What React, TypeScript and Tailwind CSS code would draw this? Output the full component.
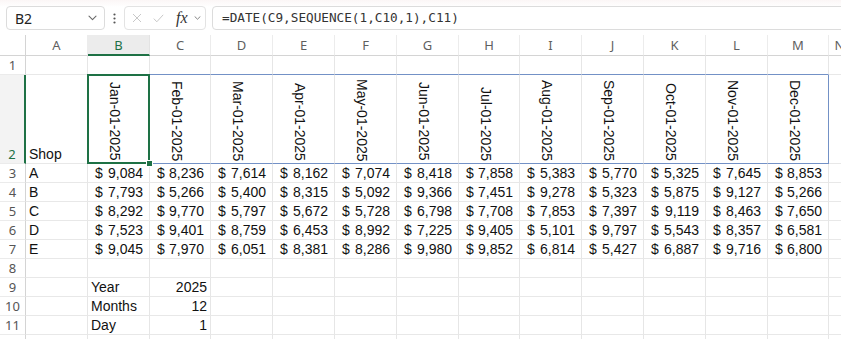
import React from "react";

const colLetters = ["A", "B", "C", "D", "E", "F", "G", "H", "I", "J", "K", "L", "M", "N"];
const months = ["Jan", "Feb", "Mar", "Apr", "May", "Jun", "Jul", "Aug", "Sep", "Oct", "Nov", "Dec"];
const shops = ["A", "B", "C", "D", "E"];
const data: string[][] = [
  ["9,084", "8,236", "7,614", "8,162", "7,074", "8,418", "7,858", "5,383", "5,770", "5,325", "7,645", "8,853"],
  ["7,793", "5,266", "5,400", "8,315", "5,092", "9,366", "7,451", "9,278", "5,323", "5,875", "9,127", "5,266"],
  ["8,292", "9,770", "5,797", "5,672", "5,728", "6,798", "7,708", "7,853", "7,397", "9,119", "8,463", "7,650"],
  ["7,523", "9,401", "8,759", "6,453", "8,992", "7,225", "9,405", "5,101", "9,797", "5,543", "8,357", "6,581"],
  ["9,045", "7,970", "6,051", "8,381", "8,286", "9,980", "9,852", "6,814", "5,427", "6,887", "9,716", "6,800"],
];

const uiFont = "font-['Noto_Sans','Open_Sans',sans-serif]";
const cellFont = "font-['Liberation_Sans',Arial,sans-serif]";

const grid = "border-r border-b border-r-[#e6e6e6] border-b-[#e8e8e8]";
const blueB = "border-r border-b border-r-[#e6e6e6] border-b-[#7391c6]";

function RowHead({ n, selected }: { n?: number; selected?: boolean }) {
  return (
    <div
      className={`${uiFont} text-[13px] leading-[16px] flex items-end justify-center pb-px border-b border-b-[#ebebeb] ${
        selected
          ? "border-r-2 border-r-[#1e7145] text-[#1e7145] bg-[#f3f3f3]"
          : "border-r border-r-[#d4d4d4] text-[#555]"
      }`}
    >
      {n}
    </div>
  );
}

function Empty({ cls = grid }: { cls?: string }) {
  return <div className={cls} />;
}

function Chevron({ className }: { className?: string }) {
  return (
    <svg className={className} width="9" height="6" viewBox="0 0 9 6" fill="none">
      <path d="M1 1.2 L4.5 4.6 L8 1.2" stroke="#6b6b6b" strokeWidth="1.1" strokeLinecap="round" strokeLinejoin="round" />
    </svg>
  );
}

export default function App() {
  const rows: React.ReactNode[] = [];

  rows.push(<div key="corner" className="border-r border-b border-r-[#d4d4d4] border-b-[#d4d4d4]" />);
  colLetters.forEach((c) => {
    const sel = c === "B";
    rows.push(
      <div
        key={"h" + c}
        className={`${uiFont} text-[13px] flex items-center justify-center pt-[2px] ${
          sel
            ? "bg-[#ececec] text-[#1e7145] border-b-2 border-b-[#1e7145] border-r border-r-[#e3e3e3]"
            : "text-[#5f5f5f] border-b border-b-[#d4d4d4] border-r border-r-[#ececec]"
        }`}
      >
        {c}
      </div>
    );
  });

  rows.push(<RowHead key="r1" n={1} />);
  colLetters.forEach((c) => {
    const inRange = c !== "A" && c !== "N";
    rows.push(<Empty key={"r1" + c} cls={inRange ? blueB : grid} />);
  });

  rows.push(<RowHead key="r2" n={2} selected />);
  rows.push(
    <div key="r2A" className={`${grid} ${cellFont} text-[14px] leading-[16px] text-[#111] flex items-end pl-[3px] pb-px`}>
      Shop
    </div>
  );
  months.forEach((m, i) => {
    const isM = i === 11;
    const isB = i === 0;
    rows.push(
      <div
        key={"r2" + m}
        className={`relative border-b border-b-[#7391c6] border-r ${
          isM ? "border-r-[#7391c6]" : "border-r-[#e6e6e6]"
        } flex flex-col justify-end items-center pb-[2px] pr-[7px]`}
      >
        <span className={`${cellFont} text-[14px] leading-[16px] text-[#111] [writing-mode:vertical-rl] whitespace-nowrap`}>
          {m}-01-2025
        </span>
        {isB && (
          <div className="absolute inset-[-1px] border-2 border-[#1e7145] z-10 pointer-events-none">
            <div className="absolute right-[-5px] bottom-[-5px] w-[7px] h-[7px] bg-[#1e7145] border border-white" />
          </div>
        )}
      </div>
    );
  });
  rows.push(<Empty key="r2N" />);

  shops.forEach((s, r) => {
    rows.push(<RowHead key={"rh" + r} n={r + 3} />);
    rows.push(
      <div key={"a" + r} className={`${grid} ${cellFont} text-[14px] leading-[16px] text-[#111] flex items-end pl-[3px] pb-px`}>
        {s}
      </div>
    );
    data[r].forEach((v, i) => {
      rows.push(
        <div
          key={"d" + r + "-" + i}
          className={`${grid} ${cellFont} text-[14px] leading-[16px] text-[#111] flex items-end justify-between pl-[7px] pr-[6px] pb-px`}
        >
          <span>$</span>
          <span>{v}</span>
        </div>
      );
    });
    rows.push(<Empty key={"n" + r} />);
  });

  rows.push(<RowHead key="r8" n={8} />);
  colLetters.forEach((c) => rows.push(<Empty key={"r8" + c} />));

  const params: [string, string][] = [
    ["Year", "2025"],
    ["Months", "12"],
    ["Day", "1"],
  ];
  params.forEach(([label, val], k) => {
    rows.push(<RowHead key={"p" + k} n={9 + k} />);
    rows.push(<Empty key={"pA" + k} />);
    rows.push(
      <div key={"pB" + k} className={`${grid} ${cellFont} text-[14px] leading-[16px] text-[#111] flex items-end pl-[3px] pb-px`}>
        {label}
      </div>
    );
    rows.push(
      <div key={"pC" + k} className={`${grid} ${cellFont} text-[14px] leading-[16px] text-[#111] flex items-end justify-end pr-[3px] pb-px`}>
        {val}
      </div>
    );
    colLetters.slice(3).forEach((c) => rows.push(<Empty key={"p" + k + c} />));
  });

  rows.push(<RowHead key="r12" />);
  colLetters.forEach((c) => rows.push(<Empty key={"r12" + c} />));

  return (
    <div className="w-[841px] h-[339px] overflow-hidden bg-white relative">
      <div className="h-[35px] flex items-start pt-[6px] pl-[6px] bg-gradient-to-b from-[#fbf6f6] to-white to-[20%]">
        <div className="w-[99px] h-[24px] shrink-0 border border-[#dcdcdc] rounded-[4px] bg-white flex items-center justify-between pl-[8px] pr-[7px]">
          <span className={`${uiFont} text-[14px] text-[#222]`}>B2</span>
          <Chevron />
        </div>
        <div className="w-[19px] h-[24px] shrink-0 flex items-center justify-center">
          <svg width="3" height="11" viewBox="0 0 3 11">
            <circle cx="1.5" cy="1.5" r="1.1" fill="#555" />
            <circle cx="1.5" cy="5.5" r="1.1" fill="#555" />
            <circle cx="1.5" cy="9.5" r="1.1" fill="#555" />
          </svg>
        </div>
        <div className="w-[82px] h-[24px] shrink-0 border border-[#e3e3e3] rounded-[4px] bg-white flex items-center pl-[7px]">
          <svg width="10" height="10" viewBox="0 0 10 10" fill="none">
            <path d="M1 1 L9 9 M9 1 L1 9" stroke="#c8c8c8" strokeWidth="1" />
          </svg>
          <svg className="ml-[11px]" width="11" height="9" viewBox="0 0 11 9" fill="none">
            <path d="M0.8 4.6 L3.8 7.8 L10.2 0.8" stroke="#c8c8c8" strokeWidth="1" />
          </svg>
          <span className="ml-[12px] font-['Liberation_Serif',serif] italic text-[16px] leading-[16px] text-[#333]">fx</span>
          <Chevron className="ml-[5px] scale-75" />
        </div>
        <div className="ml-[6px] flex-1 h-[24px] -mr-[20px] border border-[#dcdcdc] rounded-[4px] bg-white flex items-center pl-[9px]">
          <span className="font-['DejaVu_Sans_Mono',monospace] text-[12.7px] text-[#333] whitespace-nowrap">
            =DATE(C9,SEQUENCE(1,C10,1),C11)
          </span>
        </div>
      </div>

      <div className="grid grid-cols-[26px_62px_62px_61px_62px_62px_62px_62px_61px_62px_62px_62px_62px_61px_22px] grid-rows-[21px_19px_89px_repeat(10,19px)]">
        {rows}
      </div>
    </div>
  );
}
